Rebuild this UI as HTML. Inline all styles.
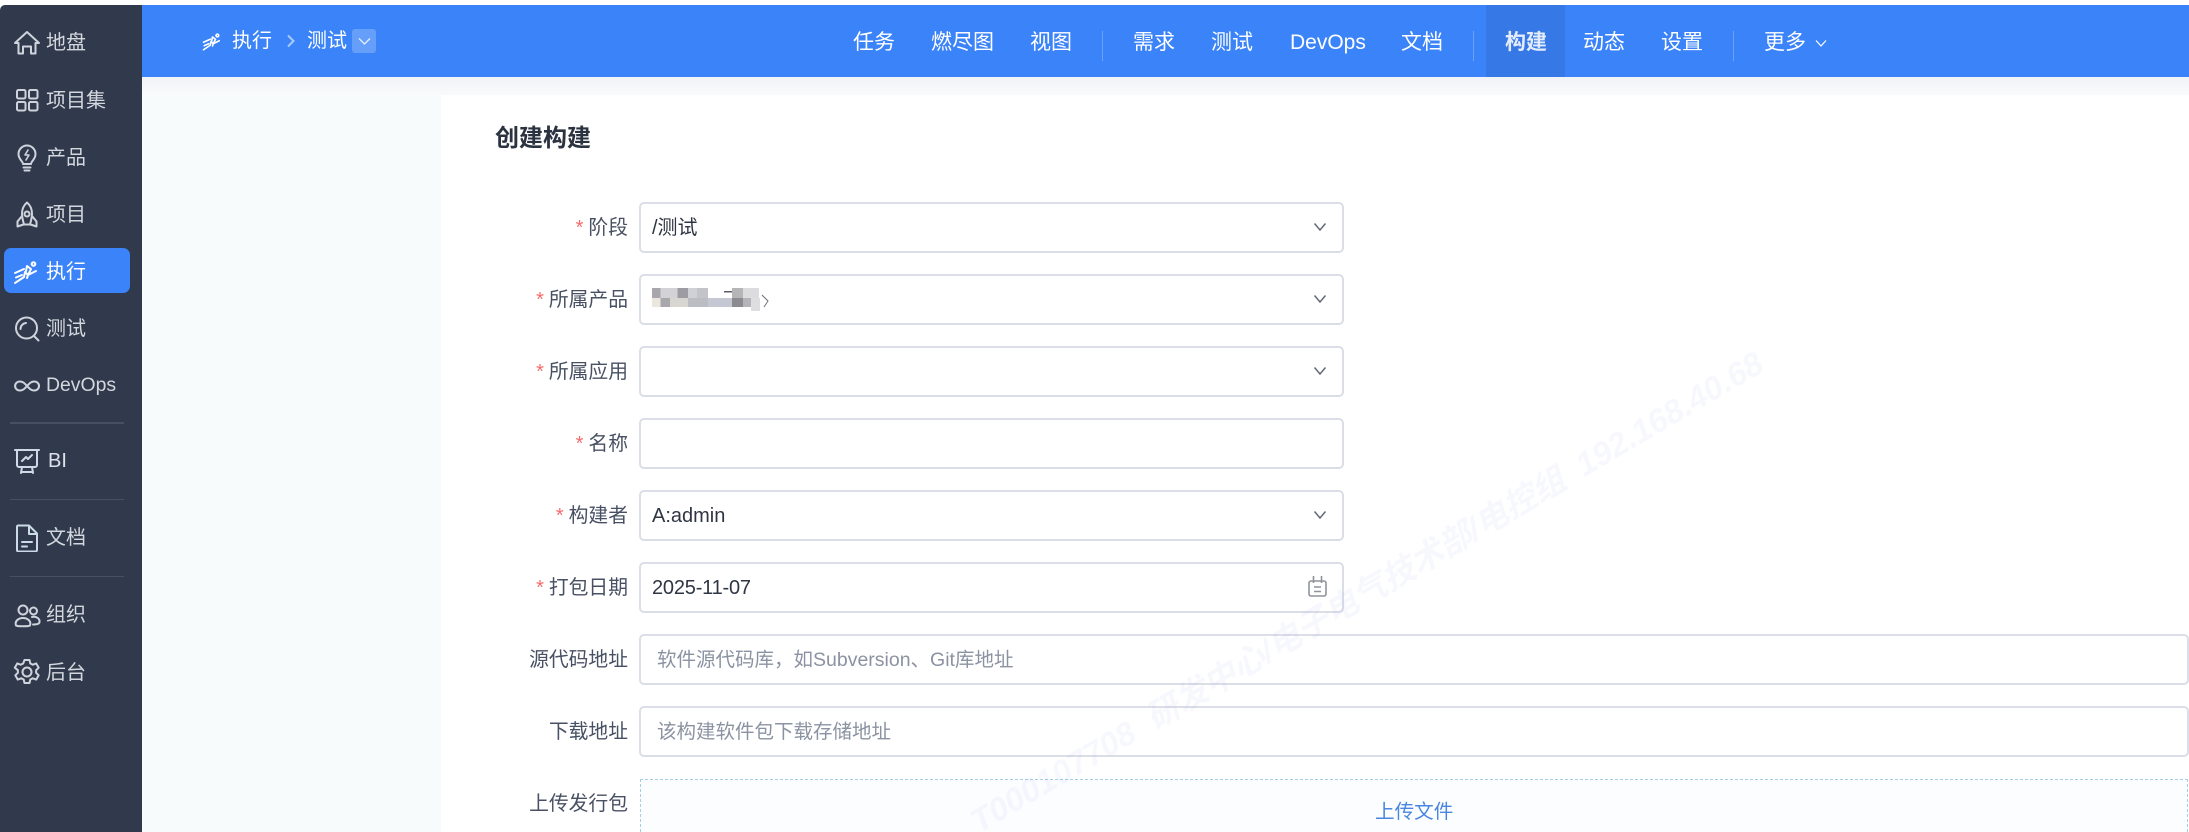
<!DOCTYPE html>
<html lang="zh"><head><meta charset="utf-8"><title>创建构建</title>
<style>
html,body{margin:0;padding:0;width:2189px;height:832px;overflow:hidden;background:#fff}
body{font-family:"Liberation Sans","Noto Sans CJK SC",sans-serif;position:relative}
.a{position:absolute;white-space:nowrap}
#side{position:absolute;left:0;top:5px;width:142px;height:827px;background:#313a4c;border-top-left-radius:5px}
#main{position:absolute;left:142px;top:77px;width:2047px;height:755px;background:#f8fbfc}
#card{position:absolute;left:441px;top:95px;width:1748px;height:737px;background:#fff}
#head{position:absolute;left:142px;top:5px;width:2047px;height:72px;background:#3b83f8}
.si{position:absolute;left:46px;font-size:20px;line-height:28px;color:#d3d7de;white-space:nowrap}
.ic{position:absolute;left:13px;width:28px;height:28px;fill:none;stroke:#cfd4dc;stroke-width:2;stroke-linecap:round;stroke-linejoin:round}
.dv{position:absolute;left:10px;width:114px;height:1.5px;background:#465063}
.n{position:absolute;top:24px;font-size:21px;line-height:28px;color:#fff;white-space:nowrap}
.d{position:absolute;top:26px;width:1px;height:30px;background:#6ba1fa}
.l{position:absolute;right:1561px;font-size:19.800px;line-height:28px;color:#485163;white-space:nowrap}
.l b{color:#f56c6c;font-weight:400;margin-right:5px;font-size:20px}
.f{position:absolute;left:639px;height:47px;border:2px solid #dcdee7;border-radius:5px;background:#fff;box-sizing:content-box}
.t{position:absolute;left:652px;font-size:20px;line-height:28px;color:#2f3643;white-space:nowrap}
.p{position:absolute;left:657px;font-size:19.500px;line-height:28px;color:#8b93a2;white-space:nowrap}
.c{position:absolute;left:1313px;width:14px;height:10px;fill:none;stroke:#5d6470;stroke-width:1.4}
</style></head><body>
<div id="main"></div>
<div style="position:absolute;left:142px;top:77px;width:2047px;height:18px;background:linear-gradient(#f1f3f6,#f8fbfc)"></div>
<div id="card"></div>

<div id="head">
 <div class="a" style="left:1344px;top:0;width:79px;height:72px;background:#3678e6"></div>
</div>
<div style="position:absolute;left:142px;top:5px;width:2047px;height:72px">
 <span class="n" style="left:711px">任务</span>
 <span class="n" style="left:789px">燃尽图</span>
 <span class="n" style="left:888px">视图</span>
 <i class="d" style="left:960px"></i>
 <span class="n" style="left:991px">需求</span>
 <span class="n" style="left:1069px">测试</span>
 <span class="n" style="left:1148px">DevOps</span>
 <span class="n" style="left:1259px">文档</span>
 <i class="d" style="left:1331px"></i>
 <span class="n" style="left:1363px;font-weight:700;color:#e4ecfb">构建</span>
 <span class="n" style="left:1441px">动态</span>
 <span class="n" style="left:1519px">设置</span>
 <i class="d" style="left:1591px"></i>
 <span class="n" style="left:1622px">更多</span>
 <svg class="a" style="left:1673px;top:34px;fill:none;stroke:#fff;stroke-width:1.2" width="12" height="9"><path d="M1 1.500 6 7l5-5.500"/></svg>
</div>
<!-- breadcrumb -->
<svg class="a" style="left:202px;top:31px;fill:none;stroke:#fff;stroke-width:2.200;stroke-linecap:round;stroke-linejoin:round" width="21" height="21" viewBox="0 0 28 28"><circle cx="20.500" cy="6" r="1.800"/><path d="M2 25l9-6 1-5 3 3 8-4M15 17l-1 3M13 13l1-5 4 3-3 6M2 15l9-4M3 19.500l6-2.500"/></svg>
<span class="a" style="left:232px;top:27px;font-size:20px;line-height:28px;color:#fff">执行</span>
<svg class="a" style="left:286px;top:34px;fill:none;stroke:#a9cbfc;stroke-width:2" width="10" height="14"><path d="M2 1.500 7.500 7 2 12.500"/></svg>
<span class="a" style="left:307px;top:27px;font-size:20px;line-height:28px;color:#fff">测试</span>
<div class="a" style="left:352px;top:29px;width:24px;height:24px;background:#659ffa;border-radius:3px"></div>
<svg class="a" style="left:358px;top:37px;fill:none;stroke:#e6efff;stroke-width:1.300" width="13" height="9"><path d="M1 1.500 6.500 7 12 1.500"/></svg>

<!-- sidebar -->
<div id="side"></div>
<div class="a" style="left:4px;top:248px;width:126px;height:45px;background:#3b83f8;border-radius:7px"></div>
<svg class="ic" style="top:29px" viewBox="0 0 28 28"><path d="M2 14 14 3l12 11h-3.500v10.500h-4.500v-7h-8v7H5.500V14z"/></svg>
<span class="si" style="top:29px">地盘</span>
<svg class="ic" style="top:86px" viewBox="0 0 28 28"><rect x="4" y="4" width="8.500" height="8.500" rx="1.500"/><rect x="16" y="4" width="8.500" height="8.500" rx="1.500"/><rect x="4" y="16" width="8.500" height="8.500" rx="1.500"/><rect x="16" y="16" width="8.500" height="8.500" rx="1.500"/></svg>
<span class="si" style="top:87px">项目集</span>
<svg class="ic" style="top:144px" viewBox="0 0 28 28"><path d="M10 20c0-3-4.500-4.500-4.500-10a8.500 8.500 0 0 1 17 0c0 5.500-4.500 7-4.500 10zM10.500 23.500h7M11.500 26.500h5"/><path d="M15 6l-3 5h4l-3 5" stroke-width="1.600"/></svg>
<span class="si" style="top:144px">产品</span>
<svg class="ic" style="top:201px" viewBox="0 0 28 28"><path d="M14 1.500c3.500 3 5 7 5 11 0 4-1 7.500-2 11h-6c-1-3.500-2-7-2-11 0-4 1.500-8 5-11zM9 15l-4.500 5.500v5l6-2M19 15l4.500 5.500v5l-6-2"/><circle cx="14" cy="13" r="2.500"/></svg>
<span class="si" style="top:201px">项目</span>
<svg class="ic" style="top:258px;stroke:#fff" viewBox="0 0 28 28"><circle cx="20.500" cy="6" r="1.800"/><path d="M2 25l9-6 1-5 3 3 8-4M15 17l-1 3M13 13l1-5 4 3-3 6M2 15l9-4M3 19.500l6-2.500"/></svg>
<span class="si" style="top:258px;color:#fff">执行</span>
<svg class="ic" style="top:315px" viewBox="0 0 28 28"><circle cx="13.500" cy="13" r="10.500"/><path d="M21 21 25.500 25.500M7.500 14A6 6 0 0 1 13 8"/></svg>
<span class="si" style="top:315px">测试</span>
<svg class="ic" style="top:372px" viewBox="0 0 28 28"><path d="M14 14C11 10.500 9.500 9.500 7 9.500a4.500 4.500 0 0 0 0 9c2.500 0 4-1 7-4.500s4.500-4.500 7-4.500a4.500 4.500 0 0 1 0 9c-2.500 0-4-1-7-4.500z" transform="translate(-.5 0) scale(1.040 1)"/></svg>
<span class="si" style="top:371px;font-size:19.400px">DevOps</span>
<div class="dv" style="top:422px"></div>
<svg class="ic" style="top:447px;stroke:#cfdae6" viewBox="0 0 28 28"><path d="M2 3h24M4 3v15a2 2 0 0 0 2 2h16a2 2 0 0 0 2-2V3M9 20l-1 6M19 20l1 6M8 25h12M9 14l4-4 2 2 4-4"/></svg>
<span class="si" style="top:447px;left:48px;color:#dbe2ea">BI</span>
<div class="dv" style="top:499px;height:1px"></div>
<svg class="ic" style="top:524px;stroke:#cbdae6" viewBox="0 0 28 28"><path d="M5 1.500h11l8 8V26a1.500 1.500 0 0 1-1.500 1.500h-17.500A1.500 1.500 0 0 1 4 26V3A1.500 1.500 0 0 1 5 1.500zM16 2v8h8M9 18h10M9 22.500h5"/></svg>
<span class="si" style="top:524px">文档</span>
<div class="dv" style="top:575.500px"></div>
<svg class="ic" style="top:601px" viewBox="0 0 28 28"><circle cx="10" cy="9" r="4.500"/><circle cx="20.500" cy="10" r="3.500"/><path d="M3 24.500c-1.500-4 2-7.500 7-7.500s8.500 3.500 7 7.500c-1.500 1-12.500 1-14 0zM19 16c4-1 8 1.500 7.500 5 0 2-3 2.500-6.500 2.500"/></svg>
<span class="si" style="top:601px">组织</span>
<svg class="ic" style="top:658px" viewBox="0 0 28 28"><path d="M11.500 2h5l.8 3.500 2.500 1.200 3.400-1.300 2.500 4.300-2.600 2.500v2.600l2.600 2.500-2.500 4.300-3.400-1.300-2.500 1.200-.8 3.500h-5l-.8-3.500-2.500-1.200-3.400 1.300-2.500-4.300 2.600-2.500v-2.600L1.800 9.700l2.500-4.300 3.400 1.300 2.500-1.200z"/><circle cx="14" cy="14" r="4.500"/></svg>
<span class="si" style="top:658.500px">后台</span>

<!-- title -->
<div class="a" style="left:495px;top:121.500px;font-size:24px;line-height:34px;font-weight:700;color:#2b3340">创建构建</div>

<!-- form -->
<span class="l" style="top:214px"><b>*</b>阶段</span>
<div class="f" style="top:202px;width:701px"></div>
<span class="t" style="top:214px">/测试</span>
<svg class="c" style="top:222px"><path d="M1.500 1.500 7 8l5.500-6.500"/></svg>

<span class="l" style="top:286px"><b>*</b>所属产品</span>
<div class="f" style="top:274px;width:701px"></div>
<svg class="a" style="left:652px;top:288px" width="126" height="26"><g>
<rect x="0" y="0" width="8.500" height="10" fill="#a9a7ad"/><rect x="8.500" y="0" width="17" height="10" fill="#d3d3d7"/><rect x="25.500" y="0" width="10.500" height="10" fill="#9d9ca3"/><rect x="36" y="0" width="9" height="10" fill="#d0d1d6"/><rect x="45" y="0" width="11" height="10" fill="#c3c4ca"/><rect x="72" y="3" width="8" height="1.500" fill="#5a5f68"/><rect x="80" y="0" width="11" height="10" fill="#b5b5b8"/><rect x="91" y="0" width="16" height="10" fill="#dcdcde"/>
<rect x="0" y="10" width="8.500" height="9" fill="#ebe6de"/><rect x="8.500" y="10" width="9.500" height="9" fill="#a8a8ac"/><rect x="18" y="10" width="18" height="9" fill="#d7d6d0"/><rect x="36" y="10" width="20" height="9" fill="#bcbdc2"/><rect x="56" y="10" width="24" height="9" fill="#c5c8d2"/><rect x="80" y="10" width="11" height="9" fill="#8b8b90"/><rect x="91" y="10" width="8" height="9" fill="#b4b5ba"/><rect x="99" y="10" width="9" height="13" fill="#dedee0"/>
<path d="M110 7l6 6-4 6" fill="none" stroke="#6b707a" stroke-width="1"/>
</g></svg>
<svg class="c" style="top:294px"><path d="M1.500 1.500 7 8l5.500-6.500"/></svg>

<span class="l" style="top:358px"><b>*</b>所属应用</span>
<div class="f" style="top:346px;width:701px"></div>
<svg class="c" style="top:366px"><path d="M1.500 1.500 7 8l5.500-6.500"/></svg>

<span class="l" style="top:430px"><b>*</b>名称</span>
<div class="f" style="top:418px;width:701px"></div>

<span class="l" style="top:502px"><b>*</b>构建者</span>
<div class="f" style="top:490px;width:701px"></div>
<span class="t" style="top:502px">A:admin</span>
<svg class="c" style="top:510px"><path d="M1.500 1.500 7 8l5.500-6.500"/></svg>

<span class="l" style="top:574px"><b>*</b>打包日期</span>
<div class="f" style="top:562px;width:701px"></div>
<span class="t" style="top:574px;letter-spacing:-.2px">2025-11-07</span>
<svg class="a" style="left:1308px;top:575px;fill:none;stroke:#8f949c;stroke-width:1.600" width="20" height="22"><rect x="1" y="6" width="17" height="15" rx="2"/><path d="M5.500 1v7M13.500 1v7M6 12h7M6 16.500h7"/></svg>

<span class="l" style="top:646px">源代码地址</span>
<div class="f" style="top:634px;width:1546px"></div>
<span class="p" style="top:646px">软件源代码库，如Subversion、Git库地址</span>

<span class="l" style="top:718px">下载地址</span>
<div class="f" style="top:706px;width:1546px"></div>
<span class="p" style="top:718px">该构建软件包下载存储地址</span>

<span class="l" style="top:790px">上传发行包</span>
<div class="a" style="left:640px;top:779px;width:1548px;height:53px;box-sizing:border-box;border:1px dashed #a5cde6;border-bottom:none;background:#fbfdff"></div>
<span class="a" style="left:1375px;top:798px;font-size:19.600px;line-height:28px;color:#4a86e0">上传文件</span>

<svg class="a" style="left:0;top:0;pointer-events:none;overflow:hidden" width="2189" height="832"><g fill="rgba(70,90,200,.045)" font-family="Liberation Sans,Noto Sans CJK SC,sans-serif" font-style="italic" font-weight="700" font-size="33"><text x="1766" y="370" text-anchor="end" transform="rotate(-30.500 1766 370)">T000107708&#160;&#160;研发中心/电子电气技术部/电控组&#160;&#160;192.168.40.68</text></g></svg>
</body></html>
